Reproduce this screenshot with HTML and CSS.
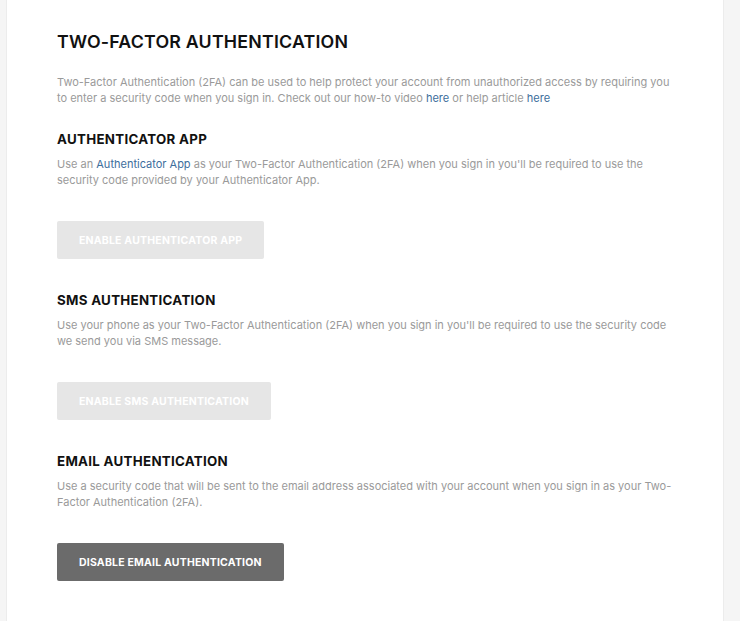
FILE: index.html
```html
<!DOCTYPE html>
<html lang="en">
<head>
    <meta charset="UTF-8">
    <meta name="viewport" content="width=device-width, initial-scale=1.0">
    <title>Two-Factor Authentication</title>
    <link rel="stylesheet" href="styles.css">
</head>
<body>
    <div class="page">
        <div class="card">
            <h1>TWO-FACTOR AUTHENTICATION</h1>
            <p class="intro">Two-Factor Authentication (2FA) can be used to help protect your account from unauthorized access by requiring you to enter a security code when you sign in. Check out our how-to video <a href="#">here</a> or help article <a href="#">here</a></p>

            <div class="section">
                <h2>AUTHENTICATOR APP</h2>
                <p>Use an <a href="#">Authenticator App</a> as your Two-Factor Authentication (2FA) when you sign in you'll be required to use the security code provided by your Authenticator App.</p>
                <button class="btn disabled">ENABLE AUTHENTICATOR APP</button>
            </div>

            <div class="section">
                <h2>SMS AUTHENTICATION</h2>
                <p>Use your phone as your Two-Factor Authentication (2FA) when you sign in you'll be required to use the security code we send you via SMS message.</p>
                <button class="btn disabled">ENABLE SMS AUTHENTICATION</button>
            </div>

            <div class="section">
                <h2>EMAIL AUTHENTICATION</h2>
                <p>Use a security code that will be sent to the email address associated with your account when you sign in as your Two-Factor Authentication (2FA).</p>
                <button class="btn active">DISABLE EMAIL AUTHENTICATION</button>
            </div>
        </div>
    </div>
</body>
</html>
```

FILE: styles.css
```css
html, body {
    margin: 0;
    height: 100%;
}
body {
    font-family: Inter, "Liberation Sans", sans-serif;
    background-color: #f5f5f5;
    color: #111;
}
.page {
    height: 100%;
    padding-left: 6px;
    box-sizing: border-box;
}
.card {
    width: 718px;
    height: 100%;
    box-sizing: border-box;
    background-color: #fff;
    border-left: 1px solid #ececec;
    border-right: 1px solid #ececec;
    padding: 30px 46px 0 50px;
}
h1 {
    margin: 0 0 20px 0;
    font-size: 17.8px;
    font-weight: 600;
    line-height: 24px;
    letter-spacing: 0.2px;
}
h2 {
    margin: 0 0 8px 0;
    font-size: 13.3px;
    font-weight: 700;
    line-height: 18px;
    letter-spacing: 0.3px;
}
p {
    margin: 0;
    font-size: 11px;
    line-height: 16px;
    color: #9a9a9a;
}
a {
    color: #3d6e9c;
    text-decoration: none;
}
.intro {
    margin-bottom: 24px;
}
.section {
    margin-bottom: 32px;
}
.section p {
    margin-bottom: 33px;
}
.btn {
    display: block;
    height: 38px;
    padding: 0 22px;
    border: none;
    border-radius: 2px;
    font-family: inherit;
    font-size: 10.5px;
    font-weight: 700;
    letter-spacing: 0.2px;
    color: #fff;
}
.btn.disabled {
    background-color: #e6e6e6;
}
.btn.active {
    background-color: #6b6b6b;
    cursor: pointer;
}
```
